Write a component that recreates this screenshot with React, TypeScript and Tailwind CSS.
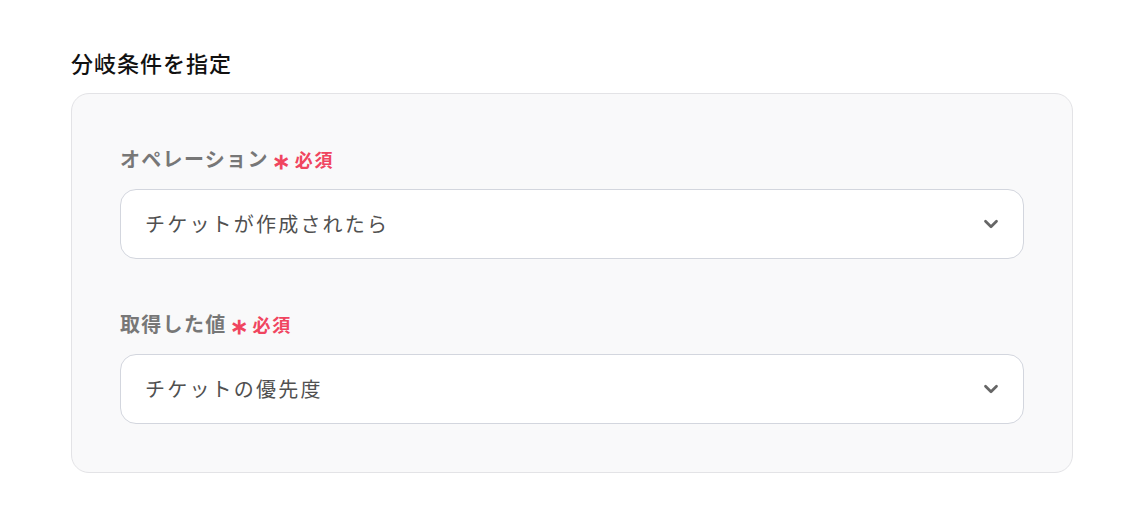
import { ChevronDown } from 'lucide-react';

type FieldProps = {
  label: string;
  value: string;
};

function SelectField({ label, value }: FieldProps) {
  return (
    <div>
      <div className="flex h-[28px] items-center">
        <span className="text-[20px] font-bold leading-[28px] tracking-[0.065em] text-[#777777]">{label}</span>
        <span className="ml-[3px] text-[22px] font-bold leading-[28px] text-[#f0455f]">∗</span>
        <span className="ml-[5px] text-[18px] font-bold leading-[28px] tracking-[0.1em] text-[#f0455f]">必須</span>
      </div>
      <div className="mt-[16px] flex h-[70px] items-center justify-between rounded-[16px] border border-[#d3d6de] bg-white pl-[24px] pr-[21px]">
        <span className="text-[20px] leading-[28px] tracking-[0.11em] text-[#505050]">{value}</span>
        <ChevronDown className="h-[22px] w-[22px] text-[#666666]" strokeWidth={3} />
      </div>
    </div>
  );
}

export default function App() {
  return (
    <main
      className="min-h-[514px] bg-white px-[71px] pt-[46px]"
      style={{ fontFamily: '"Noto Sans CJK JP", "Noto Sans", sans-serif' }}
    >
      <h2 className="text-[22px] font-medium leading-[32px] tracking-[0.045em] text-[#111111]">分岐条件を指定</h2>
      <section className="mt-[15px] w-[1002px] rounded-[18px] border border-[#e3e3e6] bg-[#f9f9fa] px-[48px] pb-[48px] pt-[51px]">
        <SelectField label="オペレーション" value="チケットが作成されたら" />
        <div className="mt-[51px]">
          <SelectField label="取得した値" value="チケットの優先度" />
        </div>
      </section>
    </main>
  );
}
